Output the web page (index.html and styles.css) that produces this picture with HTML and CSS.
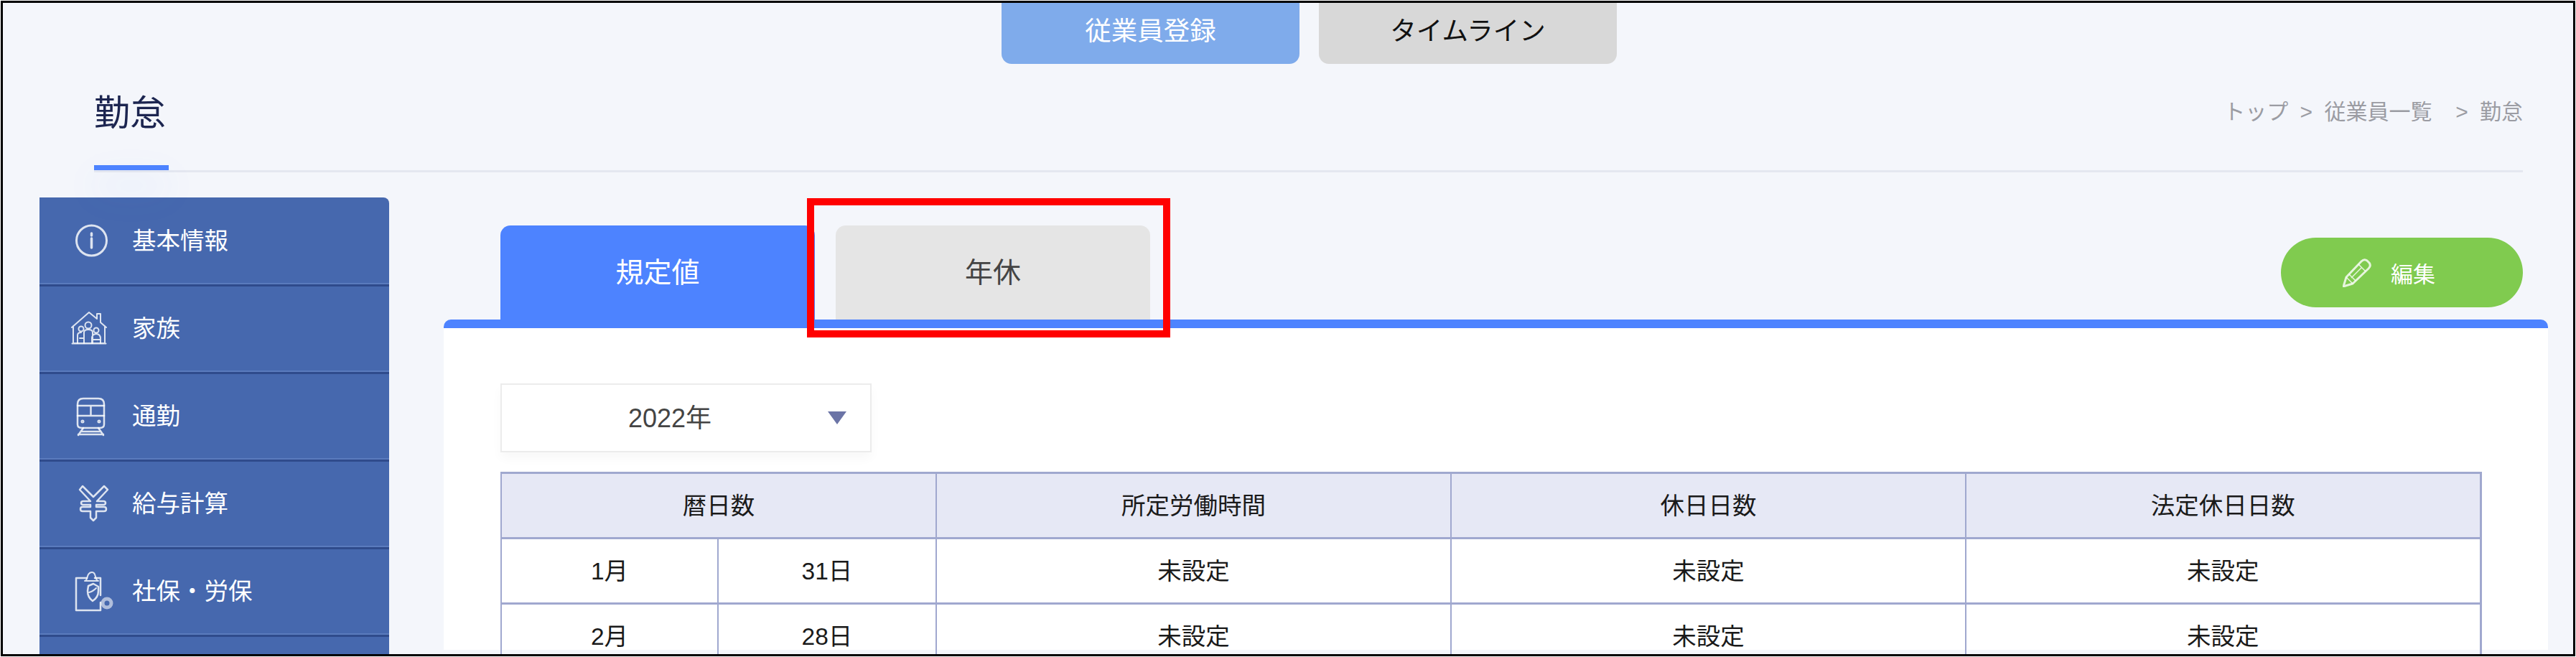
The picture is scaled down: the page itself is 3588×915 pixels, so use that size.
FILE: index.html
```html
<!DOCTYPE html>
<html lang="ja">
<head>
<meta charset="utf-8">
<title>勤怠</title>
<link rel="stylesheet" href="styles.css">
</head>
<body>
<div class="frame">
  <nav class="top-tabs">
    <a class="top-tab top-tab-on">従業員登録</a>
    <a class="top-tab top-tab-off">タイムライン</a>
  </nav>
  <header class="page-head">
    <h1 class="page-title">勤怠</h1>
    <div class="crumbs">トップ &gt; 従業員一覧 &nbsp;&gt; 勤怠</div>
  </header>
  <div class="page-body">
    <aside class="side">
      <a class="side-item">
        <svg class="side-icon" viewBox="0 0 68 60"><circle cx="31.500" cy="30" r="21" stroke-width="3"/><path d="M31.500 27v13" stroke-width="3.500"/><path d="M31.500 20v3" stroke-width="3.500"/></svg>
        <span>基本情報</span>
      </a>
      <a class="side-item">
        <svg class="side-icon" viewBox="0 0 68 60"><path d="M4 29L28 8l11 9v-7h5v12l8 7M6 27v24h44V27M4.500 51.500h47"/><circle cx="27" cy="26" r="4.500"/><circle cx="17" cy="31" r="3.500"/><circle cx="38" cy="33" r="3.500"/><path d="M21 51V36q0-4 6-4t6 4v15M12 51V40q0-4 5-4M32 51v-6q0-7 6-7t6 7v6M15 44h5M33 46h10"/></svg>
        <span>家族</span>
      </a>
      <a class="side-item">
        <svg class="side-icon" viewBox="0 0 68 60"><path d="M20 6h21q8 0 8 8v28q0 5-6 5H18q-6 0-6-5V14q0-8 8-8z" stroke-width="2.500"/><path d="M12 16h37M12 30h37M30.500 16v14" stroke-width="2.500"/><path d="M20 47l-7 10M41 47l7 10M13 56h35M17 52h27" stroke-width="2.500"/><circle cx="19" cy="38" r="1.500"/><circle cx="42" cy="38" r="1.500"/></svg>
        <span>通勤</span>
      </a>
      <a class="side-item">
        <svg class="side-icon" viewBox="0 0 68 60"><path d="M15 11l4-5 15 15 15-15 5 5-15 16h9q3 0 3 2.500T48 32H38v3h11q3 0 3 3t-3 3H38v9l-4 4-4-4v-9H19q-3 0-3-3t3-3h11v-3H20q-3 0-3-2.500t3-2.500h10z" stroke-width="2.500"/></svg>
        <span>給与計算</span>
      </a>
      <a class="side-item">
        <svg class="side-icon" viewBox="0 0 68 60"><path d="M25 12h-15v45h34V46M44 36V12H36" stroke-width="2.500"/><path d="M22 16h-0q2 0 3-3 1-4 2-6 2-3 5-3t4 3l2 6q1 3 3 3H22z" stroke-width="2"/><path d="M27 23l7-3 7 4v6q0 9-8 14-7-5-7-14z" stroke-width="2.500"/><path d="M28 32q5-1 10-6" stroke-width="2"/><circle cx="53" cy="47" r="6" stroke-width="5" opacity=".7"/></svg>
        <span>社保・労保</span>
      </a>
      <a class="side-item"></a>
    </aside>
    <main class="main">
      <div class="tabs-row">
        <a class="tab tab-on">規定値</a>
        <a class="tab tab-off">年休</a>
        <button class="edit-btn" type="button">
          <svg class="edit-icon" viewBox="0 0 40 40"><path d="M1 39l4-13L26 4q4-4 8-1l3 3q3 4-1 8L14 35z"/><path d="M5 26l9 9M9 22l9 9M22 8l10 10M12 27L27 12" class="edit-thin"/></svg>
          <span>編集</span>
        </button>
      </div>
      <section class="card">
        <div class="year-select">
          <span class="year-value">2022年</span>
          <span class="year-arrow"></span>
        </div>
        <table class="days">
          <colgroup>
            <col class="c-month"><col class="c-days"><col class="c-wide"><col class="c-wide"><col class="c-wide">
          </colgroup>
          <thead>
            <tr><th colspan="2">暦日数</th><th>所定労働時間</th><th>休日日数</th><th>法定休日日数</th></tr>
          </thead>
          <tbody>
            <tr><td>1月</td><td>31日</td><td>未設定</td><td>未設定</td><td>未設定</td></tr>
            <tr><td>2月</td><td>28日</td><td>未設定</td><td>未設定</td><td>未設定</td></tr>
          </tbody>
        </table>
      </section>
    </main>
  </div>
  <div class="callout"></div>
</div>
</body>
</html>
```

FILE: styles.css
```css
* { box-sizing: border-box; }
html, body { margin: 0; padding: 0; background: #fff; }
body {
  width: 3588px;
  height: 915px;
  overflow: hidden;
  font-family: "Liberation Sans", "Noto Sans CJK JP", sans-serif;
  color: #222;
}
.frame {
  position: relative;
  width: 3586px;
  height: 913px;
  margin: 1px;
  border: 3px solid #000;
  background: #f4f6fb;
  overflow: hidden;
}
.top-tabs {
  display: flex;
  gap: 27px;
  height: 85px;
  margin-left: 1391px;
}
.top-tab {
  width: 415px;
  display: flex;
  align-items: center;
  justify-content: center;
  padding-bottom: 12px;
  font-size: 36.500px;
  border-radius: 0 0 14px 14px;
}
.top-tab-on { background: #7fabeb; color: #fff; }
.top-tab-off { background: #d8d8d8; color: #111; }

.page-head {
  position: relative;
  display: flex;
  align-items: center;
  justify-content: space-between;
  height: 151px;
  margin: 0 70px 0 127px;
  padding-bottom: 10px;
  border-bottom: 3px solid #e4e7f0;
}
.page-title {
  margin: 0;
  font-size: 50px;
  font-weight: 400;
  line-height: 70px;
  color: #1c2550;
}
.page-head::after {
  content: "";
  position: absolute;
  left: 0;
  bottom: 0;
  width: 104px;
  height: 7px;
  background: #4d83ff;
  box-shadow: 0 25px 50px rgba(77, 131, 255, .22);
}
.crumbs {
  font-size: 30px;
  word-spacing: 8px;
  color: #9b9ca3;
  margin-top: -10px;
}

.page-body { display: flex; align-items: flex-start; }
.side {
  width: 487px;
  margin: 35px 0 0 51px;
  padding-top: 2px;
  background: #4668ae;
  border-radius: 0 8px 0 0;
}
.side-item {
  display: flex;
  align-items: center;
  gap: 20px;
  height: 122px;
  padding: 0 0 8px 41px;
  font-size: 33.500px;
  color: #fff;
  border-bottom: 3px solid #2f4b8c;
  box-shadow: inset 0 -2px 0 #5a7bbd;
}
.side-icon {
  width: 68px;
  height: 60px;
  margin-top: 4px;
  fill: none;
  stroke: #fff;
  stroke-opacity: .82;
  stroke-width: 2;
  stroke-linecap: round;
  stroke-linejoin: round;
}

.main {
  width: 2931px;
  margin-left: 76px;
  padding-top: 74px;
}
.tabs-row {
  display: flex;
  align-items: flex-end;
  gap: 29px;
  height: 131px;
  padding: 0 35px 0 79px;
}
.tab {
  width: 438px;
  height: 131px;
  display: flex;
  align-items: center;
  justify-content: center;
  padding-bottom: 8px;
  font-size: 39px;
  border-radius: 14px 14px 0 0;
}
.tab-on { background: #4d83ff; color: #fff; }
.tab-off { background: #e5e5e5; color: #444; }
.edit-btn {
  margin: 0 0 17px auto;
  width: 337px;
  height: 97px;
  display: flex;
  align-items: center;
  justify-content: center;
  gap: 27px;
  padding: 0 36px 0 0;
  border: 0;
  border-radius: 49px;
  background: #80cb4f;
  color: #fff;
  font: inherit;
  font-size: 31px;
}
.edit-icon {
  width: 40px;
  height: 40px;
  fill: none;
  stroke: #fff;
  stroke-opacity: .8;
  stroke-width: 3;
  stroke-linejoin: round;
}
.edit-thin { stroke-width: 1.500; }

.card {
  background: #fff;
  border-top: 12px solid #4d83ff;
  border-radius: 10px 10px 0 0;
  padding: 77px 93px 0 79px;
  height: 460px;
}
.year-select {
  display: flex;
  align-items: center;
  width: 517px;
  height: 96px;
  padding: 0 33px 0 14px;
  background: #fff;
  border: 2px solid #ececec;
  box-shadow: 0 8px 14px rgba(0, 0, 0, .03);
}
.year-value {
  flex: 1;
  text-align: center;
  font-size: 36px;
  color: #444;
  margin-bottom: 6px;
}
.year-arrow {
  width: 0;
  height: 0;
  border-left: 13px solid transparent;
  border-right: 13px solid transparent;
  border-top: 18px solid #6b74a6;
}
.days {
  width: 2757px;
  margin-top: 27px;
  table-layout: fixed;
  border-collapse: collapse;
  font-size: 33.500px;
  color: #1a1a1a;
}
.c-month { width: 302px; }
.c-days { width: 304px; }
.c-wide { width: 717px; }
.days th, .days td {
  height: 91px;
  padding: 0 0 5px;
  text-align: center;
  font-weight: 400;
  border-style: solid;
  border-color: #a0a8cf;
  border-width: 3px 2px;
}
.days th { background: #e6e8f5; }
.days tr > :last-child { border-right-width: 3px; }
.days tr > :first-child { border-left-width: 2px; }

.callout {
  position: absolute;
  left: 1120px;
  top: 272px;
  width: 506px;
  height: 194px;
  border: 10px solid #f00;
}
```
